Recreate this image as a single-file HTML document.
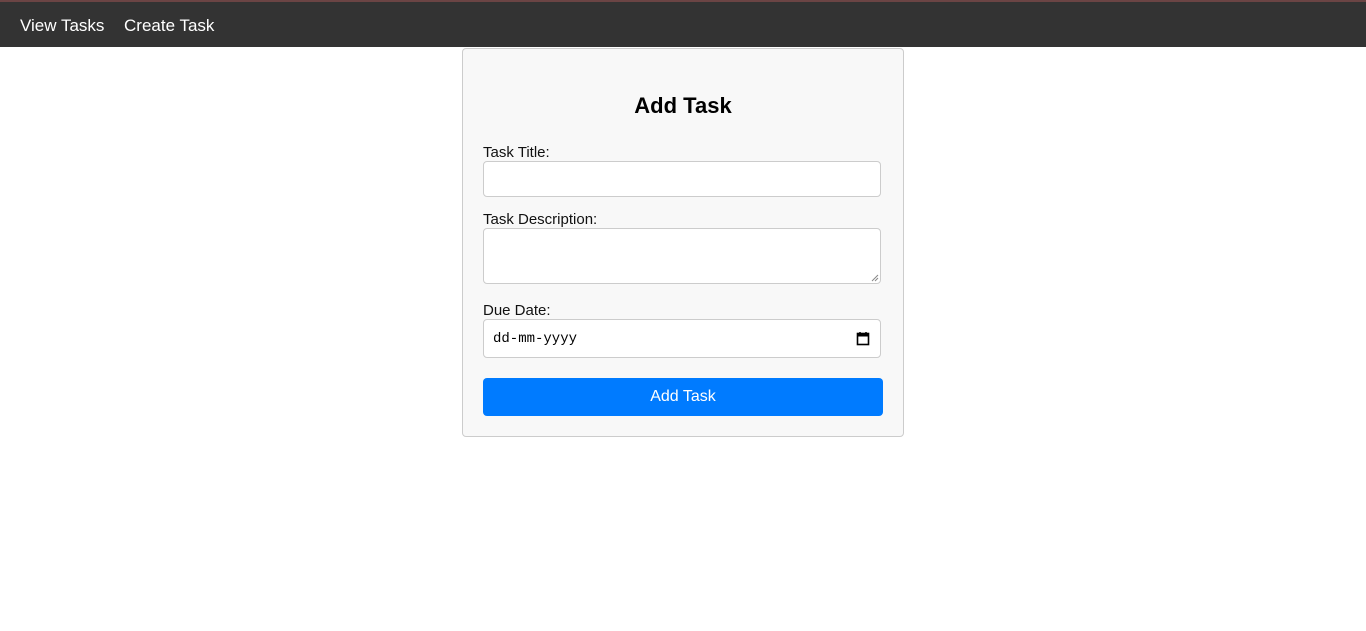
<!DOCTYPE html>
<html><head><style>
*{box-sizing:border-box;margin:0;padding:0}
body{width:1366px;height:631px;background:#fff;font-family:"Liberation Sans",sans-serif;position:relative;overflow:hidden}
.nav{position:absolute;left:0;top:0;width:1366px;height:47px;background:#333;border-top:2px solid #6b4444}
.nav span{position:absolute;top:14px;color:#fff;font-size:17px}
.card{position:absolute;left:462px;top:48px;width:442px;height:389px;background:#f8f8f8;border:1px solid #ccc;border-radius:4px}
.abs{position:absolute}
h2{position:absolute;left:0;width:100%;top:44px;text-align:center;font-size:22px;font-weight:bold;color:#000}
.lbl{position:absolute;left:20px;font-size:15px;color:#111}
.in{position:absolute;left:20px;width:398px;background:#fff;border:1px solid #ccc;border-radius:4px}
.btn{position:absolute;left:20px;top:329px;width:400px;height:38px;background:#007bff;border-radius:4px;color:#fff;font-size:16px;text-align:center;line-height:37px}
</style></head><body>
<div class="nav"><span style="left:20px">View Tasks</span><span style="left:124px">Create Task</span></div>
<div class="card">
<h2>Add Task</h2>
<div class="lbl" style="top:95px">Task Title:</div>
<div class="in" style="top:112px;height:36px"></div>
<div class="lbl" style="top:162px">Task Description:</div>
<div class="in" style="top:179px;height:56px"><svg class="abs" style="right:1px;bottom:1px" width="8" height="8"><path d="M7 1L1 7M7 4L4 7" stroke="#888"/></svg></div>
<div class="lbl" style="top:253px">Due Date:</div>
<div class="in" style="top:270px;height:39px"><span class="abs" style="left:9px;top:11px;font-family:'Liberation Mono',monospace;font-size:14px;color:#000">dd-mm-yyyy</span>
<svg class="abs" style="left:372px;top:11px" width="14" height="15"><rect x="1.5" y="2.5" width="11" height="11" fill="none" stroke="#000" stroke-width="1.6"/><rect x="1.5" y="2.5" width="11" height="3" fill="#000"/><path d="M4 1v3M10 1v3" stroke="#000" stroke-width="1.5"/></svg></div>
<div class="btn">Add Task</div>
</div>
</body></html>
